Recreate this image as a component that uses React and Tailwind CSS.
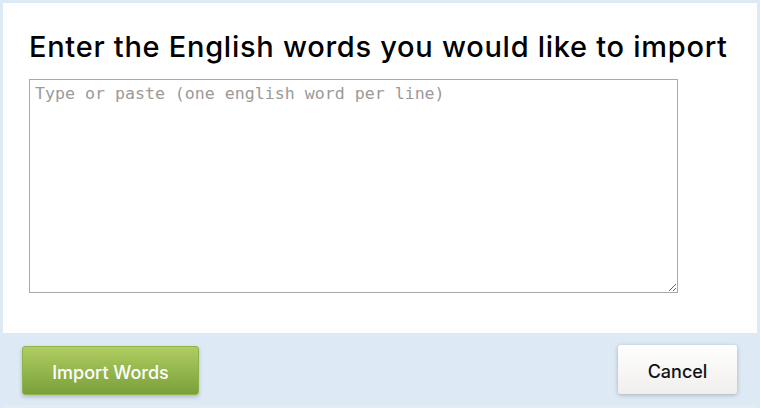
export default function App() {
  return (
    <div className="w-[760px] h-[408px] bg-[#dde9f5] pt-[3px] px-[3px] flex flex-col" style={{ fontFamily: "Inter, 'Open Sans', sans-serif" }}>
      <div className="bg-white flex-1 flex flex-col pl-[26px] pr-[20px] pt-[27px]">
        <h1 className="text-[29px] leading-[34px] font-medium text-black whitespace-nowrap tracking-[0.72px]">
          Enter the English words you would like to import
        </h1>
        <textarea
          className="mt-[15px] w-[649px] h-[214px] border border-[#a9a9a9] px-[5px] py-[4px] text-[16.6px] leading-[20px] text-[#333] placeholder:text-[#9a9a9a] outline-none"
          style={{ fontFamily: "'DejaVu Sans Mono', monospace" }}
          placeholder="Type or paste (one english word per line)"
        />
      </div>
      <div className="h-[75px] shrink-0 flex items-start justify-between pl-[19px] pr-[20px] pt-[13px] border-b-[3px] border-[#e4ecf3]">
        <button className="w-[177px] h-[49px] pt-[3px] rounded-[3px] border border-[#8db34b] bg-gradient-to-b from-[#b0cd61] to-[#7aa03b] text-white text-[18px] font-medium shadow-[0_2px_4px_rgba(0,0,0,0.2)]">
          Import Words
        </button>
        <button className="w-[119px] h-[49px] pt-[3px] rounded-[3px] bg-gradient-to-b from-[#ffffff] to-[#f1efec] text-[#111] text-[18px] font-medium shadow-[0_1px_4px_rgba(0,0,0,0.25)] -mt-[1px]">
          Cancel
        </button>
      </div>
    </div>
  );
}
